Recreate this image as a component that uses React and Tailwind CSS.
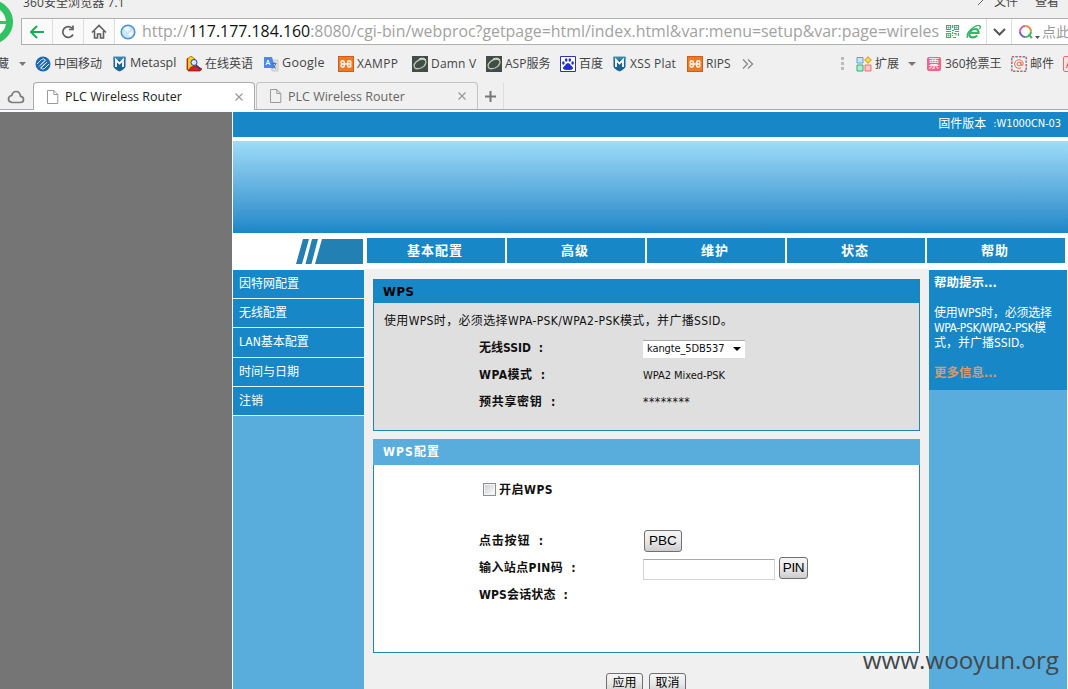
import React from 'react';

const uiFont = "font-['Open_Sans','Noto_Sans_CJK_SC',sans-serif]";
const pageFont = "font-['DejaVu_Sans_Condensed','Noto_Sans_CJK_SC',sans-serif]";

function Globe() {
  return (
    <svg width="16" height="16" viewBox="0 0 16 16">
      <circle cx="8" cy="8" r="6.8" fill="#c9e6f8" stroke="#4f91cf" strokeWidth="1.5" />
      <path d="M4 5q2-3 5-2l1 3-3 2zM8 10l4-3 1 3-3 3z" fill="#eef9ff" />
    </svg>
  );
}

function PageIcon() {
  return (
    <svg width="12" height="14" viewBox="0 0 12 14" fill="none" stroke="#999">
      <path d="M.5.5h6.3l4 4v9H.5zM6.8.5v4h4" />
    </svg>
  );
}

function MobileIcon() {
  return (
    <svg width="16" height="16" viewBox="0 0 16 16" fill="none">
      <circle cx="8" cy="8" r="7.5" fill="#1f69b3" />
      <path d="M2 8l4.500-4.500q2-1.500 4 .5L6 8.500M14 8l-4.500 4.500q-2 1.500-4-.5L10 7.500M4 10.500l6-6M6 12l6-6" stroke="#d4e9fa" strokeWidth="1" />
    </svg>
  );
}

function ShieldIcon() {
  return (
    <svg width="13" height="16" viewBox="0 0 13 16">
      <path d="M.5.8h12v9.4q0 2.4-6 5.3-6-2.900-6-5.300z" fill="#1c6391" />
      <path d="M.5.8h12v3H.5z" fill="#3589b5" />
      <path d="M3 11V4l3.500 3.500L10 4v7" fill="none" stroke="#fff" strokeWidth="1.800" />
    </svg>
  );
}

function EnglishIcon() {
  return (
    <svg width="17" height="16" viewBox="0 0 17 16">
      <path d="M1 3l4-3 4 3v11H1z" fill="#f4d120" stroke="#9a6b10" strokeWidth=".8" />
      <path d="M5 11l6-1 5 3-2 2H2z" fill="#d8231e" stroke="#7a1512" strokeWidth=".7" />
      <circle cx="8" cy="6.500" r="3" fill="#d6e8ff" stroke="#2a3d9a" strokeWidth="1" />
      <path d="M10 9l4 4" stroke="#2a3d9a" strokeWidth="1.600" />
      <path d="M1.500 2v12" stroke="#cf2620" strokeWidth="1.200" />
    </svg>
  );
}

function TranslateIcon() {
  return (
    <svg width="16" height="16" viewBox="0 0 16 16">
      <path d="M6 4h9v11H9z" fill="#dedede" stroke="#b5b5b5" strokeWidth=".6" />
      <path d="M1 1h8l3 11H1z" fill="#4c86ee" />
      <path d="M3 9l2-5 2 5M3.700 7.500h2.700" stroke="#fff" fill="none" />
      <path d="M8.500 7.500h5M11 6v1.500M12.700 8q-1 3-3 4.500M9.500 8.500q1 2.500 3.500 4" stroke="#4b75b8" fill="none" />
    </svg>
  );
}

function XamppIcon() {
  return (
    <svg width="16" height="16" viewBox="0 0 16 16">
      <rect x=".5" y=".5" width="15" height="15" fill="#ee7a29" stroke="#cb601a" />
      <path d="M6.300 8H4.700a1.600 1.600 0 1 1 1.600-1.600v3.200A1.600 1.600 0 1 1 4.700 8h6.600a1.600 1.600 0 1 0-1.600-1.600v3.200A1.600 1.600 0 1 0 11.300 8" fill="none" stroke="#fff3e2" strokeWidth="1.600" />
    </svg>
  );
}

function DvwaIcon() {
  return (
    <svg width="16" height="16" viewBox="0 0 16 16" fill="none">
      <path d="M0 0h16v16H0z" fill="#424c4c" />
      <path d="M3 12C0 8 6 3 11 3c5 1 3 7-2 9-3 1-5 1-6 0" stroke="#b8cba5" strokeWidth="1.300" />
      <path d="M7 3q5-2 7 1" stroke="#e6eddf" />
    </svg>
  );
}

function BaiduIcon() {
  return (
    <svg width="16" height="16" viewBox="0 0 16 16">
      <path d="M.5.5h15v15H.5z" fill="#fff" stroke="#2a32b5" />
      <g fill="#252ed0">
        <ellipse cx="3.400" cy="7" rx="1.300" ry="1.800" />
        <ellipse cx="6.200" cy="4" rx="1.300" ry="1.800" />
        <ellipse cx="9.800" cy="4" rx="1.300" ry="1.800" />
        <ellipse cx="12.600" cy="7" rx="1.300" ry="1.800" />
        <path d="M8 7q2 0 3 2.500 2.500 1.500 2 3-.8 2-5 1.300-4.200.7-5-1.300-.5-1.500 2-3Q6 7 8 7" />
      </g>
    </svg>
  );
}

function ExtensionsIcon() {
  return (
    <svg width="16" height="16" viewBox="0 0 16 16">
      <path d="M1 1.500h6v5.500H1z" fill="#c8e5fb" stroke="#5da1d8" />
      <path d="M1 9h6v6H1z" fill="#b2ebd0" stroke="#37aa79" />
      <path d="M9 9h6v6H9z" fill="#fbc4c3" stroke="#df7977" />
      <path d="M11 1h2v2h2v2h-2v2h-2V5H9V3h2z" fill="#ffe14e" stroke="#d69a1b" strokeWidth=".8" />
    </svg>
  );
}

function TicketIcon() {
  return (
    <span className="w-[14px] h-[14px] rounded-[2px] bg-[#ed6686] text-white text-[11px] leading-[14px] text-center">票</span>
  );
}

function MailIcon() {
  return (
    <svg width="16" height="16" viewBox="0 0 16 16" fill="none">
      <rect x=".8" y=".8" width="14.400" height="14.400" stroke="#e5564a" strokeWidth="1.500" strokeDasharray="2.400 4.800" />
      <rect x=".8" y=".8" width="14.400" height="14.400" stroke="#5289c6" strokeWidth="1.500" strokeDasharray="2.400 4.800" strokeDashoffset="3.600" />
      <circle cx="8" cy="8" r="1.900" stroke="#ed6a4a" />
      <path d="M10 5.800v3.400q1.800 1.500 2.200-1.200A4.300 4.300 0 1 0 10 11.800" stroke="#ed6a4a" />
    </svg>
  );
}

const bookmarks = [
  { label: '中国移动', icon: <MobileIcon />, box: 'w-[78px]', text: 'text-[12px]' },
  { label: 'Metaspl', icon: <ShieldIcon />, box: 'w-[73px]', text: 'text-[12.5px] ml-px' },
  { label: '在线英语', icon: <EnglishIcon />, box: 'w-[77px]', text: 'text-[12px] -ml-px' },
  { label: 'Google', icon: <TranslateIcon />, box: 'w-[75px]', text: 'text-[12.5px] tracking-[0.3px]' },
  { label: 'XAMPP', icon: <XamppIcon />, box: 'w-[74px]', text: 'text-[12px] tracking-[0.3px]' },
  { label: 'Damn V', icon: <DvwaIcon />, box: 'w-[74px]', text: 'text-[12px] tracking-[0.2px]' },
  { label: 'ASP服务', icon: <DvwaIcon />, box: 'w-[74px]', text: 'text-[12px]' },
  { label: '百度', icon: <BaiduIcon />, box: 'w-[53px]', text: 'text-[12px]' },
  { label: 'XSS Plat', icon: <ShieldIcon />, box: 'w-[74px]', text: 'text-[12px] ml-px tracking-[0.2px]' },
  { label: 'RIPS', icon: <XamppIcon />, box: 'w-[54px]', text: 'text-[12px]' },
];

function Tab({ active }) {
  return (
    <div
      className={
        active
          ? 'w-[222px] h-7 shrink-0 flex items-center pl-[13px] pr-[11px] rounded-t border border-b-0 border-[#aaa] bg-white text-[#222]'
          : 'w-[222px] h-[27px] ml-px shrink-0 flex items-center pl-[13px] pr-[11px] rounded-t border border-b-0 border-[#c4c4c4] bg-[#f0f0f0] text-[#666]'
      }
    >
      <PageIcon />
      <span className="mt-[2px] ml-[6px] text-[12.5px] whitespace-nowrap">PLC Wireless Router</span>
      <svg className="ml-auto" width="8" height="8" viewBox="0 0 8 8" stroke="#999" strokeWidth="1.2">
        <path d="M.5.5l7 7M7.500.5l-7 7" />
      </svg>
    </div>
  );
}

function BrowserChrome() {
  return (
    <div className={`relative h-[112px] bg-[#f0f0f0] overflow-hidden text-[#444] ${uiFont}`}>
      <div className="h-[18px] flex text-[12px] leading-[18px] whitespace-nowrap">
        <span className="-mt-[6px] ml-[23px] tracking-[0.1px]">360安全浏览器 7.1</span>
        <svg className="ml-auto mr-[8px]" width="9" height="7" viewBox="0 0 9 7" stroke="#666" fill="none">
          <path d="M1 5L7-1" />
        </svg>
        <span className="-mt-[7px] w-[41px]">文件</span>
        <span className="-mt-[7px] w-[33px]">查看</span>
      </div>

      <div className="absolute -left-[31px] top-0 w-[44px] h-[44px] rounded-full border-[7px] border-[#31c264] bg-[#f8fff9]">
        <div className="mt-[14px] h-[3px] bg-[#35c467]"></div>
      </div>

      <div className="ml-[21px] h-[27px] flex items-center border border-r-0 border-[#b0b0b0] bg-white">
        <div className="w-[31px] h-full shrink-0 flex items-center justify-center bg-[#fafafa] border-r border-[#ddd]">
          <svg width="16" height="14" viewBox="0 0 16 14" fill="none" stroke="#18ad55" strokeWidth="2">
            <path d="M15 7H2M8 1L2 7l6 6" />
          </svg>
        </div>
        <div className="w-[31px] h-full shrink-0 flex items-center justify-center bg-[#fafafa] border-r border-[#ddd]">
          <svg width="14" height="14" viewBox="0 0 14 14" fill="none" stroke="#606060" strokeWidth="1.700">
            <path d="M12 9.500A5.400 5.400 0 1 1 11 3.200M12 .5v4H8" />
          </svg>
        </div>
        <div className="w-[31px] h-full shrink-0 flex items-center justify-center bg-[#fafafa] border-r border-[#ddd]">
          <svg width="16" height="15" viewBox="0 0 16 15" fill="none" stroke="#606060" strokeWidth="1.600">
            <path d="M1 8.500L8 1.500l7 7M3.500 7v7h3v-4h3v4h3V7" />
          </svg>
        </div>
        <div className="ml-[5px] shrink-0"><Globe /></div>
        <div className="-mt-px ml-[6px] w-[797px] shrink-0 overflow-hidden whitespace-nowrap text-[15.9px] leading-[24px] text-[#a2a2a2]">
          <span>http://</span>
          <span className="text-[#111]">117.177.184.160</span>
          <span>:8080/cgi-bin/webproc?getpage=html/index.html&amp;var:menu=setup&amp;var:page=wireles</span>
        </div>
        <svg className="ml-[7px] shrink-0" width="13" height="13" viewBox="0 0 13 13" fill="none" stroke="#35b768">
          <path d="M.5.5h4v4h-4zM8.500.5h4v4h-4zM.5 8.500h4v4h-4zM6.500 0v3M6 5.500h2M0 6.500h5M9 6.500h4M6.500 7v2M8 8.500h2v2M12.500 8v3M7 12.500h3M6.500 10v1" strokeWidth="1.200" />
          <path d="M2 2h1v1H2zM10 2h1v1h-1zM2 10h1v1H2z" />
        </svg>
        <svg className="ml-[7px] shrink-0" width="15" height="14" viewBox="0 0 15 14" fill="none" stroke="#35b768">
          <path d="M4 8h8.500q0-4-3-4C6 4 3.500 6.500 3.200 9c-.3 4 5 4.500 8 1.500" strokeWidth="2.200" />
          <path d="M1.500 13Q0 8 6 3.500T14 1q.8 1-.5 3" strokeWidth="1.400" />
        </svg>
        <div className="ml-[5px] w-[26px] h-full shrink-0 border-x border-[#d4e3dc] flex items-center justify-center">
          <svg width="13" height="8" viewBox="0 0 13 8" fill="none" stroke="#555" strokeWidth="2"><path d="M1 1l5.500 5.500L12 1" /></svg>
        </div>
        <svg className="ml-[6px] shrink-0" width="22" height="15" viewBox="0 0 22 15" fill="none" strokeWidth="2">
          <path d="M2 7.500A5.500 5.500 0 0 1 7.500 2" stroke="#d65ba7" />
          <path d="M7.500 2A5.500 5.500 0 0 1 13 7.500" stroke="#ee8a31" />
          <path d="M13 7.500A5.500 5.500 0 0 1 7.500 13" stroke="#40b85b" />
          <path d="M7.500 13A5.500 5.500 0 0 1 2 7.500" stroke="#7859cc" />
          <path d="M10.500 10.500l3.500 3.500" stroke="#40b85b" />
          <path d="M17 12h5l-2.500 3z" fill="#555" stroke="none" />
        </svg>
        <span className="ml-[2px] text-[14px] text-[#999] whitespace-nowrap">点此</span>
      </div>

      <div className="h-[37px] flex items-center whitespace-nowrap text-[12px]">
        <span className="w-[18px] shrink-0 -ml-[3px]">藏</span>
        <svg className="ml-[4px] mr-[9px] shrink-0" width="7" height="4"><path d="M0 0h7L3.500 4z" fill="#777" /></svg>
        {bookmarks.map((b, idx) => (
          <div key={idx} className={`${b.box} shrink-0 flex items-center gap-[3px]`}>
            <span className="shrink-0">{b.icon}</span>
            <span className={b.text}>{b.label}</span>
          </div>
        ))}
        <svg className="ml-px shrink-0" width="12" height="10" viewBox="0 0 12 10" fill="none" stroke="#888" strokeWidth="1.300">
          <path d="M1 .5L5.500 5 1 9.500M6 .5L10.500 5 6 9.500" />
        </svg>
        <svg className="ml-[87px] shrink-0" width="3" height="14" fill="#bbb"><path d="M0 0h3v3H0zM0 5h3v3H0zM0 10h3v3H0z" /></svg>
        <div className="ml-[12px] w-[52px] shrink-0 flex items-center gap-[3px]"><ExtensionsIcon />扩展</div>
        <svg className="shrink-0" width="8" height="4"><path d="M0 0h8L4 4z" fill="#777" /></svg>
        <div className="ml-[11px] w-[84px] shrink-0 flex items-center gap-[4px]"><TicketIcon />360抢票王</div>
        <div className="w-[52px] shrink-0 flex items-center gap-[3px]"><MailIcon />邮件</div>
        <span className="w-4 h-4 shrink-0 rounded-[2px] border border-[#e86a6a] bg-[#fbe2e2] text-[10px] leading-[14px] pl-[2px] text-[#d84444]">A</span>
      </div>

      <div className="h-7 flex items-end border-b border-[#aaa]">
        <svg className="ml-[7px] mr-[8px] mb-[5px] shrink-0" width="18" height="14" viewBox="0 0 18 14" fill="none" stroke="#7b7b7b" strokeWidth="1.700">
          <path d="M5 12.500h8.500q3 0 3-3t-3-3.200Q13 1.500 9 1.500 5.700 1.500 4.800 5.500 1.500 6 1.500 9T5 12.500z" />
        </svg>
        <div className="flex items-end -mb-px"><Tab active /></div>
        <Tab />
        <div className="w-[26px] h-[26px] flex items-center justify-center border-r border-[#ddd]">
          <svg width="11" height="11" stroke="#777" strokeWidth="2"><path d="M5.500 0v11M0 5.500h11" /></svg>
        </div>
      </div>
      <div className="h-[2px] bg-[#f5ffff]"></div>
    </div>
  );
}

const navItems = ['基本配置', '高级', '维护', '状态', '帮助'];

function Header() {
  return (
    <header className="bg-white">
      <div className="h-[25px] pr-[7px] bg-[#1787c7] flex justify-end items-start text-[11px] leading-[24px] text-white whitespace-pre">
        <span className="text-[12px]">固件版本</span>
        <span className="ml-[7px] tracking-[-0.1px]">:W1000CN-03</span>
      </div>
      <div className="mt-1 h-[92px] bg-linear-to-b from-[#9edcf8] to-[#1787c7]"></div>
      <div className="pt-[5px] h-[36px] flex items-start">
        <svg className="mt-px mr-1 shrink-0" width="130" height="25" viewBox="0 0 130 25">
          <path d="M70 0h6l-7 25h-6zM79 0h6l-6.500 25h-6zM89 0h41v25H82z" fill="#2280b2" />
        </svg>
        <nav className="flex gap-[2px]">
          {navItems.map((item) => (
            <a key={item} className="w-[138px] h-[25px] pr-[2px] bg-[#1787c7] text-white text-center text-[13px] font-bold leading-[26px] tracking-[1px]">
              {item}
            </a>
          ))}
        </nav>
      </div>
    </header>
  );
}

const menu = [
  { label: '因特网配置', height: 'h-[29px]' },
  { label: '无线配置', height: 'h-[29px]' },
  { label: 'LAN基本配置', height: 'h-[30px]' },
  { label: '时间与日期', height: 'h-[29px]' },
  { label: '注销', height: 'h-[29px]' },
];

function Sidebar() {
  return (
    <aside className="mt-px w-[131px] shrink-0 bg-[#58addd]">
      {menu.map((m) => (
        <div key={m.label} className={`${m.height} pl-[6px] border-b border-[#e6f6ff] bg-[#1787c7] text-white text-[12px] leading-[28px]`}>
          {m.label}
        </div>
      ))}
    </aside>
  );
}

const buttonStyle = 'border border-[#707070] rounded-[3px] bg-linear-to-b from-[#f5f5f5] via-[#e9e9e9] to-[#cdcdcd] text-black text-center';

function Row({ label, spacing, children }) {
  return (
    <div className="h-[27px] flex items-center pl-[105px]">
      <span className={`w-[164px] shrink-0 font-bold text-[12px] leading-[18px] whitespace-pre [word-spacing:4px] ${spacing}`}>{label}</span>
      {children}
    </div>
  );
}

function Content() {
  return (
    <main className="w-[565px] shrink-0 pl-[9px] pt-[10px] bg-[#f0f0f0] text-[#111]">
      <section className="w-[547px] h-[152px] border border-[#2783ac] bg-[#dfdfdf]">
        <h2 className="h-[23px] pl-[9px] bg-[#1787c7] text-[13px] leading-[24px] tracking-[0.5px] font-bold text-black">WPS</h2>
        <p className="mt-2 h-[23px] pl-[10px] text-[12px] leading-[20px] tracking-[0.35px] whitespace-nowrap">
          使用WPS时，必须选择WPA-PSK/WPA2-PSK模式，并广播SSID。
        </p>
        <Row label="无线SSID :" spacing="tracking-normal">
          <div className="mt-[2px] w-[102px] h-[18px] flex items-center justify-between pl-[4px] pr-[4px] bg-white border-t border-[#aaa] text-[11px]">
            <span className="tracking-[-0.1px]">kangte_5DB537</span>
            <svg width="8" height="4"><path d="M0 0h8L4 4z" fill="#000" /></svg>
          </div>
        </Row>
        <Row label="WPA模式 :" spacing="tracking-[0.5px]"><span className="mt-[3px] text-[11px] tracking-[-0.05px]">WPA2 Mixed-PSK</span></Row>
        <Row label="预共享密钥 :" spacing="tracking-[0.7px]"><span className="text-[12px] tracking-[0.5px]">********</span></Row>
      </section>

      <section className="mt-2 w-[547px] h-[214px] border border-t-0 border-[#2783ac] bg-white">
        <h2 className="-mx-px h-[26px] pl-[10px] bg-[#58addd] text-[12px] leading-[27px] tracking-[1.1px] font-bold text-white">WPS配置</h2>
        <div className="mt-[12px] pl-[109px] h-[25px] flex items-center">
          <span className="w-[13px] h-[13px] mr-[3px] border border-[#8e8f8f] bg-linear-to-br from-[#c8ced3] to-white shadow-[inset_0_0_0_1px_#f4f4f4]"></span>
          <span className="text-[12px] font-bold tracking-[0.5px]">开启WPS</span>
        </div>
        <div className="h-[25px]"></div>
        <Row label="点击按钮 :" spacing="tracking-[0.8px]">
          <button className={`${buttonStyle} w-[38px] h-[22px] ml-px text-[13.5px] leading-[19px] font-['Liberation_Sans',sans-serif]`}>PBC</button>
        </Row>
        <Row label="输入站点PIN码 :" spacing="tracking-[0.4px]">
          <input className="mt-[3px] w-[132px] h-[21px] bg-white border border-[#d5d5d5] border-t-[#aaa]" />
          <button className={`${buttonStyle} w-[29px] h-[22px] ml-[4px] text-[13.5px] leading-[19px] tracking-[-0.3px] font-['Liberation_Sans',sans-serif]`}>PIN</button>
        </Row>
        <Row label="WPS会话状态 :" spacing="tracking-[0.15px]" />
      </section>

      <div className="mt-[20px] pl-[233px] flex gap-[6px]">
        <button className={`${buttonStyle} w-[37px] h-[21px] text-[12px] leading-[15px]`}>应用</button>
        <button className={`${buttonStyle} w-[37px] h-[21px] text-[12px] leading-[15px]`}>取消</button>
      </div>
    </main>
  );
}

function Help() {
  return (
    <aside className="mt-px w-[138px] shrink-0 bg-[#58addd]">
      <div className="h-[120px] pl-[5px] pt-[5px] bg-[#1787c7] text-white">
        <h3 className="text-[12.5px] leading-[16px] font-bold">帮助提示...</h3>
        <div className="mt-[15px] text-[12px] leading-[15px] whitespace-nowrap">
          <p className="tracking-[-0.2px]">使用WPS时，必须选择</p>
          <p className="tracking-[-0.4px]">WPA-PSK/WPA2-PSK模</p>
          <p>式，并广播SSID。</p>
        </div>
        <a className="mt-[14px] block text-[12.5px] leading-[16px] font-bold text-[#d8996f]">更多信息...</a>
      </div>
    </aside>
  );
}

export default function App() {
  return (
    <div className="relative w-[1068px] h-[689px] overflow-hidden bg-white">
      <BrowserChrome />
      <div className={`h-[577px] flex ${pageFont}`}>
        <div className="w-[232px] shrink-0 bg-[#757575]"></div>
        <div className="ml-px w-[835px] h-full flex flex-col">
          <Header />
          <div className="flex flex-1">
            <Sidebar />
            <Content />
            <Help />
          </div>
        </div>
      </div>
      <div className="absolute right-[9px] bottom-[13px] text-[24.2px] leading-[32px] text-[#41484c] font-['Open_Sans',sans-serif]">www.wooyun.org</div>
    </div>
  );
}
